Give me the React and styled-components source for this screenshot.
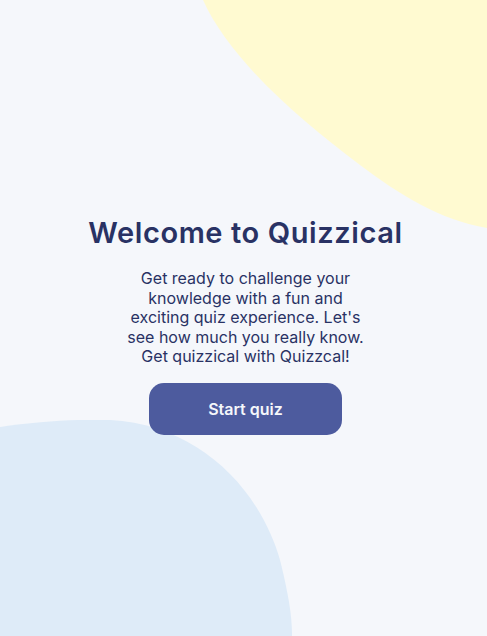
import React from 'react'
import styled, { createGlobalStyle } from 'styled-components'

const GlobalStyle = createGlobalStyle`
    * { box-sizing: border-box; }
    body {
        margin: 0;
        background: #F5F7FB;
        font-family: Inter, "Noto Sans", sans-serif;
    }
`

function App() {
    return (
        <Page>
            <GlobalStyle />
            <YellowBlob viewBox="0 0 284 230" aria-hidden="true">
                <path d="M0,0 C27,60 97,120 157,165 C197,195 237,220 284,228 L284,0 Z" fill="#FFFAD1" />
            </YellowBlob>
            <BlueBlob viewBox="0 0 292 216" aria-hidden="true">
                <path d="M0,7 C40,1 80,-1 110,0 C200,5 260,70 280,140 C290,180 292,200 292,216 L0,216 Z" fill="#DEEBF8" />
            </BlueBlob>
            <Intro>
                <Title>Welcome to Quizzical</Title>
                <Blurb>
                    Get ready to challenge your knowledge with a fun and exciting quiz experience. Let's see how much you really know. Get quizzical with Quizzcal!
                </Blurb>
                <StartButton type="button">Start quiz</StartButton>
            </Intro>
        </Page>
    )
}

export default App

const Page = styled.main`
    position: relative;
    min-height: 100vh;
    overflow: hidden;
    display: flex;
    justify-content: center;
    padding: 215px 0 0 4px;
`

const YellowBlob = styled.svg`
    position: absolute;
    top: 0;
    right: 0;
    width: 284px;
    height: 230px;
`

const BlueBlob = styled.svg`
    position: absolute;
    left: 0;
    bottom: 0;
    width: 292px;
    height: 216px;
`

const Intro = styled.section`
    position: relative;
    display: flex;
    flex-direction: column;
    align-items: center;
    text-align: center;
`

const Title = styled.h1`
    margin: 0;
    font-family: Inter, "Noto Sans", sans-serif;
    font-weight: 600;
    font-size: 29px;
    line-height: 36px;
    letter-spacing: 0.6px;
    color: #293264;
`

const Blurb = styled.p`
    margin: 18px 0 0;
    width: 240px;
    font-size: 16px;
    line-height: 19.6px;
    color: #293264;
`

const StartButton = styled.button`
    margin-top: 16px;
    width: 193px;
    height: 52px;
    border: none;
    border-radius: 15px;
    background: #4D5B9E;
    color: #F5F7FB;
    font-family: Inter, "Noto Sans", sans-serif;
    font-size: 16px;
    font-weight: 600;
    cursor: pointer;
`
